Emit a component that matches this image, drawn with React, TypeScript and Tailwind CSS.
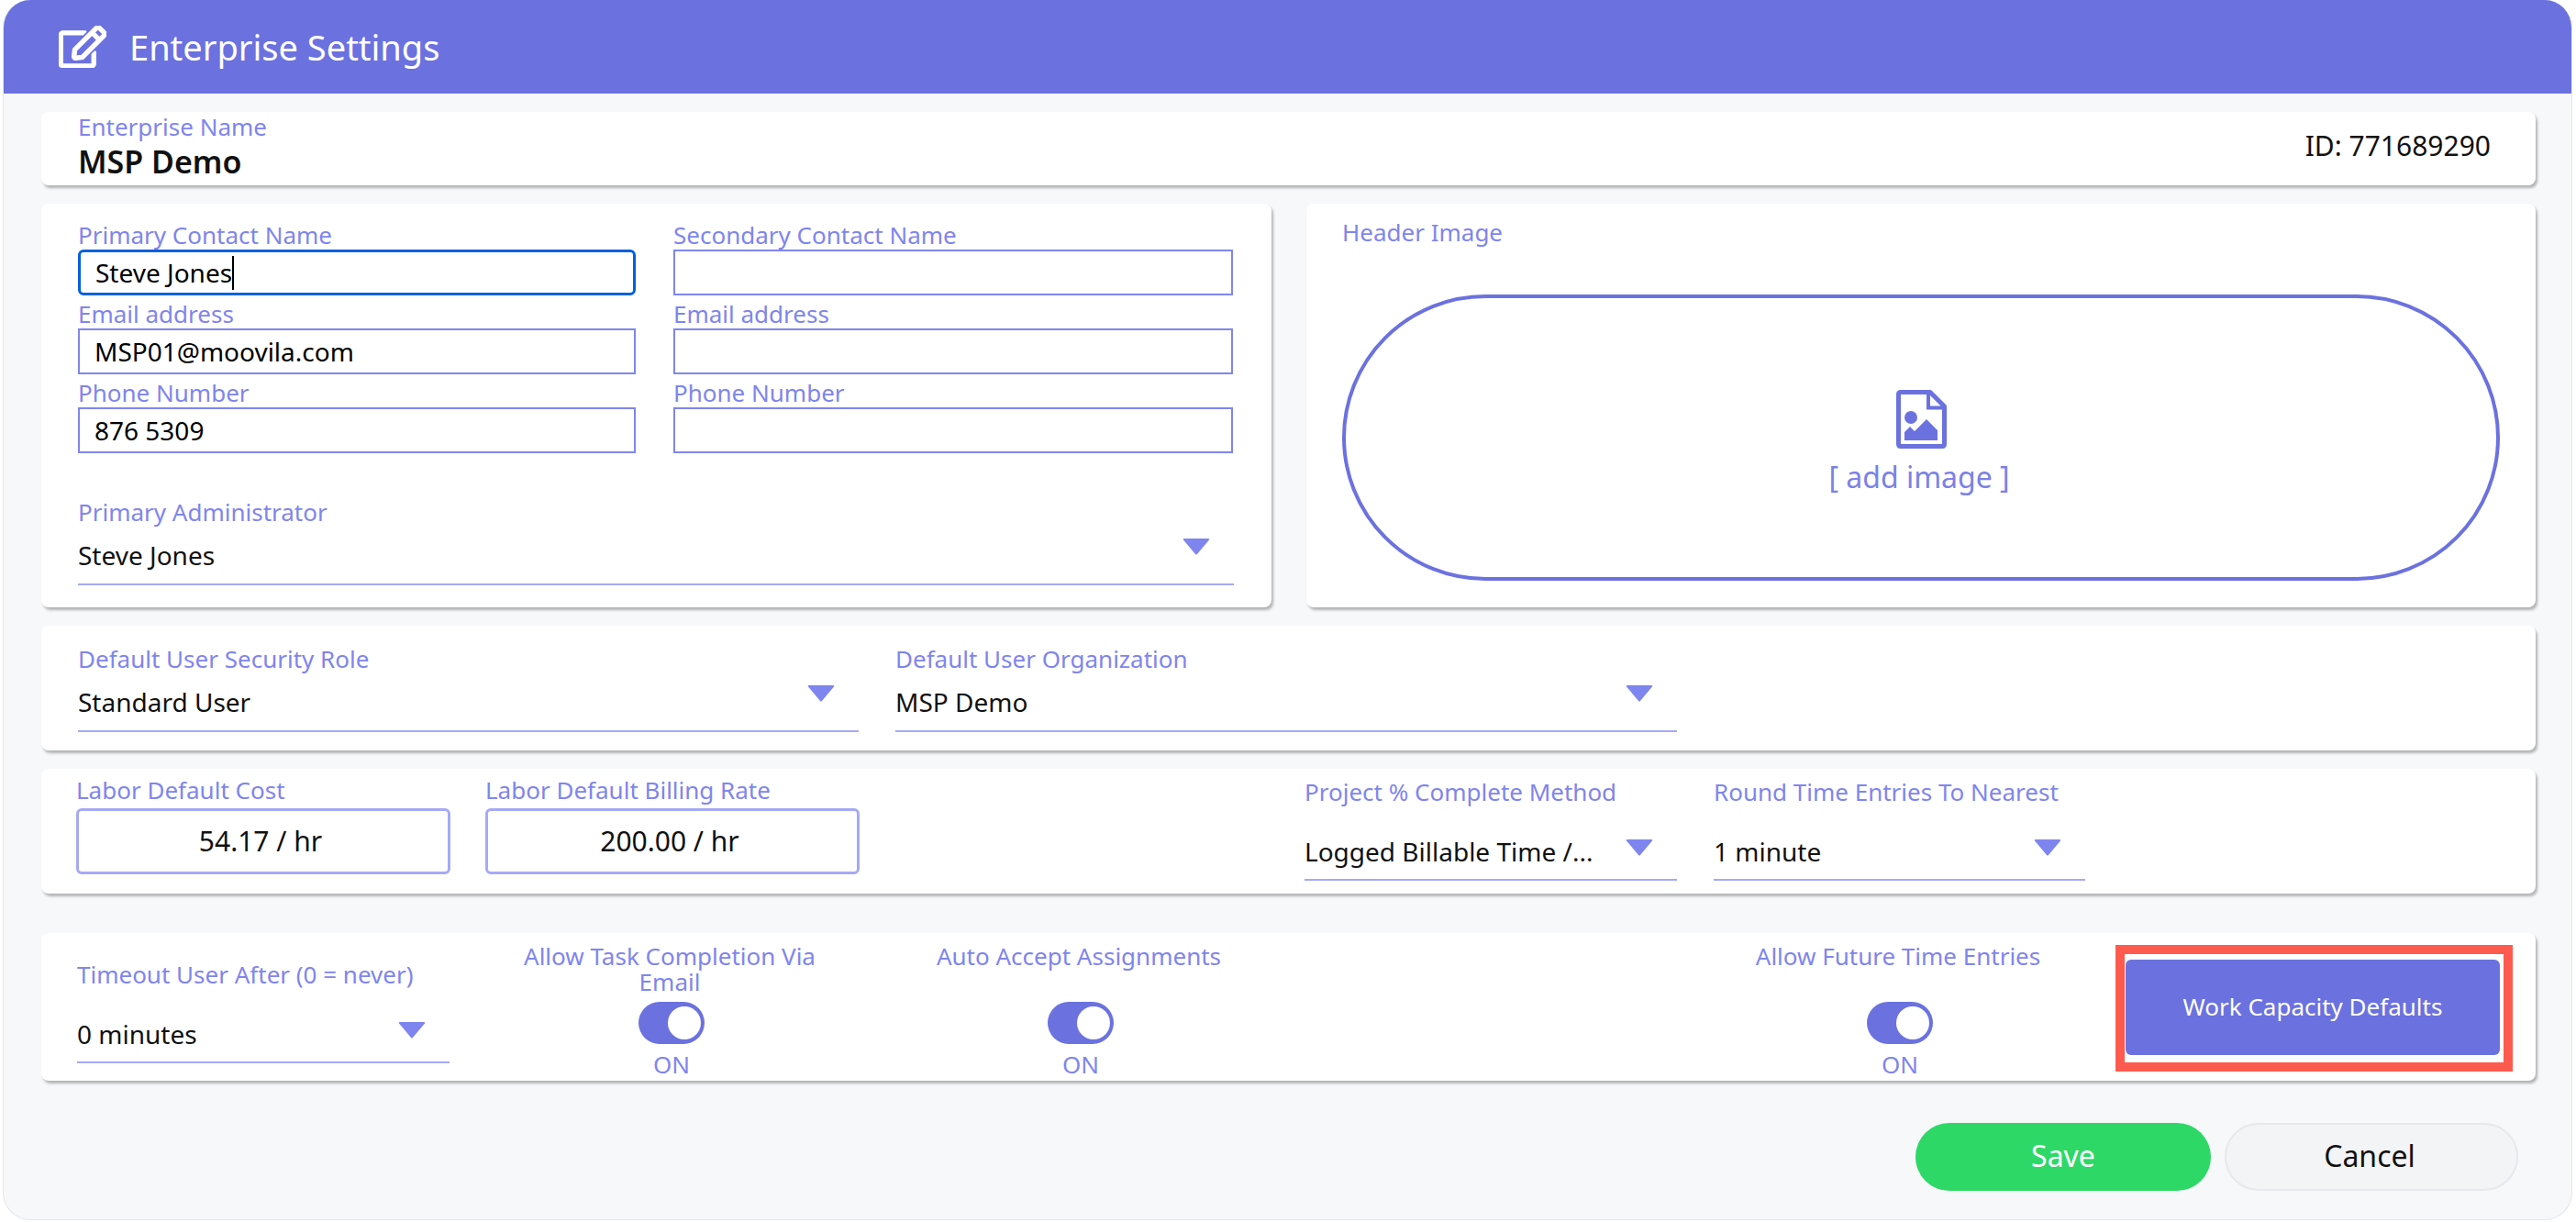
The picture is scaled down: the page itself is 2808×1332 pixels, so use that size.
import React from 'react';
import { FaRegEdit } from 'react-icons/fa';

const Label: React.FC<{ children: React.ReactNode }> = ({ children }) => (
  <div className="h-[28px] text-[26px] leading-[26px] text-[#7f85ee] whitespace-nowrap">{children}</div>
);

const TextField: React.FC<{ label: string; value?: string; focused?: boolean }> = ({ label, value, focused }) => (
  <div className="h-[86px]">
    <Label>{label}</Label>
    <div
      className={`mt-[1px] h-[50px] flex items-center pl-[16px] bg-white text-[28px] text-black ${
        focused ? 'border-[3px] border-[#0060df] rounded-[6px] pl-[15px]' : 'border-2 border-[#8085ee]'
      }`}
    >
      <span>{value}</span>
      {focused && <span className="w-[2px] h-[37px] bg-black" />}
    </div>
  </div>
);

const Caret = () => (
  <svg className="w-[30px] h-[18px] shrink-0" viewBox="0 0 30 18">
    <path d="M1 1.5 Q0 0 2 0 H28 Q30 0 29 1.5 L16 17 Q15 18 14 17 Z" fill="#7f85ee" />
  </svg>
);

const ImageFileIcon = () => (
  <svg className="w-[55px] h-[64px] mt-[11px]" viewBox="0 0 55 64">
    <path
      d="M5 2.5 H37 L52.5 18 V59 Q52.5 61.5 50 61.5 H5 Q2.5 61.5 2.5 59 V5 Q2.5 2.5 5 2.5 Z"
      fill="none"
      stroke="#6b72df"
      strokeWidth="5"
      strokeLinejoin="round"
    />
    <path d="M35 3 V19.5 H52" fill="none" stroke="#6b72df" strokeWidth="4" />
    <circle cx="16" cy="30" r="7" fill="#6b72df" />
    <path d="M9 55 V46 L15 40 L20 45 L33 32 L45 44 V55 Z" fill="#6b72df" />
  </svg>
);

const Select: React.FC<{ label: string; value: string; tall?: boolean; className?: string }> = ({
  label,
  value,
  tall,
  className,
}) => (
  <div className={className}>
    <Label>{label}</Label>
    <div
      className={`flex justify-between border-b-2 border-[#a5a9f5] pr-[26px] ${
        tall ? 'h-[82px] items-end pb-[12px]' : 'h-[65px] items-center pt-[1px]'
      }`}
    >
      <span className="text-[28px] leading-[36px] text-[#111] whitespace-nowrap">{value}</span>
      <span className={tall ? 'mb-[13px]' : 'mb-[18px]'}>
        <Caret />
      </span>
    </div>
  </div>
);

const RateInput: React.FC<{ label: string; value: string }> = ({ label, value }) => (
  <div className="w-[408px]">
    <Label>{label}</Label>
    <div className="mt-[5px] h-[72px] flex items-center justify-center rounded-[6px] border-[3px] border-[#a5a9f5] pr-[6px] pb-[2px] text-[30px] text-[#111]">
      {value}
    </div>
  </div>
);

const ToggleColumn: React.FC<{ label: React.ReactNode; className: string }> = ({ label, className }) => (
  <div className={`w-[340px] flex flex-col items-center pt-[11px] ${className}`}>
    <div className="h-[56px] text-center text-[26px] leading-[28px] text-[#7f85ee]">{label}</div>
    <div className="mt-[8px] ml-[4px] w-[72px] h-[46px] rounded-full bg-[#6b72df] flex items-center justify-end pr-[4px]">
      <div className="w-[36px] h-[36px] rounded-full bg-white" />
    </div>
    <div className="mt-[8px] ml-[4px] text-[26px] leading-[28px] text-[#7f85ee]">ON</div>
  </div>
);

const cardClass = 'bg-white rounded-[8px] shadow-[2px_3px_3px_rgba(0,0,0,0.28)]';

export default function App() {
  return (
    <div className="w-[2808px] h-[1332px] bg-white pl-[3px] font-['Noto_Sans',sans-serif] overflow-hidden">
      <div className="w-[2801px] h-[1330px] rounded-[30px] bg-[#f7f8fa] border border-[#e5e6ea] border-t-0 overflow-hidden">
        {/* Header */}
        <div className="h-[102px] bg-[#6b72df] flex items-center pl-[60px] text-white">
          <FaRegEdit className="w-[52px] h-[46px] stroke-[12px]" />
          <span className="ml-[25px] text-[38px]">Enterprise Settings</span>
        </div>

        <div className="pl-[41px] pr-[39px] pt-[20px]">
          {/* Enterprise name */}
          <div className={`${cardClass} h-[80px] flex justify-between items-center pl-[40px] pr-[49px]`}>
            <div>
              <div className="-mt-[3px]">
                <Label>Enterprise Name</Label>
              </div>
              <div className="mt-[3px] text-[34px] leading-[40px] font-semibold text-[#111]">MSP Demo</div>
            </div>
            <div className="text-[30px] text-[#111] -mt-[8px]">ID: 771689290</div>
          </div>

          {/* Contacts + header image */}
          <div className="mt-[20px] flex gap-[38px] h-[440px]">
            <div className={`${cardClass} w-[1341px] pl-[40px] pr-[41px] pt-[21px]`}>
              <div className="grid grid-cols-[608px_610px] gap-x-[41px]">
                <TextField label="Primary Contact Name" value="Steve Jones" focused />
                <TextField label="Secondary Contact Name" />
                <TextField label="Email address" value="MSP01@moovila.com" />
                <TextField label="Email address" />
                <TextField label="Phone Number" value="876 5309" />
                <TextField label="Phone Number" />
              </div>
              <Select className="mt-[44px]" label="Primary Administrator" value="Steve Jones" />
            </div>
            <div className={`${cardClass} flex-1 pl-[39px] pr-[39px] pt-[18px]`}>
              <Label>Header Image</Label>
              <div className="mt-[53px] h-[312px] rounded-[156px] border-[4px] border-[#6b72df] flex flex-col items-center justify-center">
                <ImageFileIcon />
                <div className="mt-[11px] -ml-[4px] text-[32px] leading-[40px] text-[#7b81e8]">[ add image ]</div>
              </div>
            </div>
          </div>

          {/* Default role + organization */}
          <div className={`${cardClass} mt-[20px] h-[136px] flex gap-[40px] pl-[40px] pt-[23px]`}>
            <Select className="w-[851px]" label="Default User Security Role" value="Standard User" />
            <Select className="w-[852px]" label="Default User Organization" value="MSP Demo" />
          </div>

          {/* Rates */}
          <div className={`${cardClass} mt-[20px] h-[136px] flex pl-[38px] pt-[10px]`}>
            <RateInput label="Labor Default Cost" value="54.17 / hr" />
            <div className="ml-[38px]">
              <RateInput label="Labor Default Billing Rate" value="200.00 / hr" />
            </div>
            <div className="ml-[485px] pt-[2px] flex gap-[40px]">
              <Select className="w-[406px]" tall label="Project % Complete Method" value="Logged Billable Time /..." />
              <Select className="w-[405px]" tall label="Round Time Entries To Nearest" value="1 minute" />
            </div>
          </div>

          {/* Timeout + toggles */}
          <div className={`${cardClass} mt-[43px] h-[161px] flex pl-[39px]`}>
            <div className="pt-[32px]">
              <Select className="w-[406px]" tall label="Timeout User After (0 = never)" value="0 minutes" />
            </div>
            <ToggleColumn className="ml-[70px]" label="Allow Task Completion Via Email" />
            <ToggleColumn className="ml-[106px]" label="Auto Accept Assignments" />
            <ToggleColumn className="ml-[553px]" label="Allow Future Time Entries" />
            <div className="ml-[67px] mt-[13px] w-[433px] h-[138px] border-[10px] border-[#ff5a4d] bg-white px-[1px] pt-[6px]">
              <button className="w-[408px] h-[104px] rounded-[6px] bg-[#6b72df] pb-[2px] text-white text-[26px]">
                Work Capacity Defaults
              </button>
            </div>
          </div>

          {/* Footer */}
          <div className="mt-[46px] flex justify-end gap-[15px] pr-[19px]">
            <button className="w-[322px] h-[74px] rounded-full bg-[#2ed867] pb-[2px] text-white text-[32px]">Save</button>
            <button className="w-[320px] h-[74px] rounded-full bg-[#f3f4f6] border-2 border-[#e7e8ec] pb-[2px] pr-[4px] text-[#111] text-[32px]">
              Cancel
            </button>
          </div>
        </div>
      </div>
    </div>
  );
}
